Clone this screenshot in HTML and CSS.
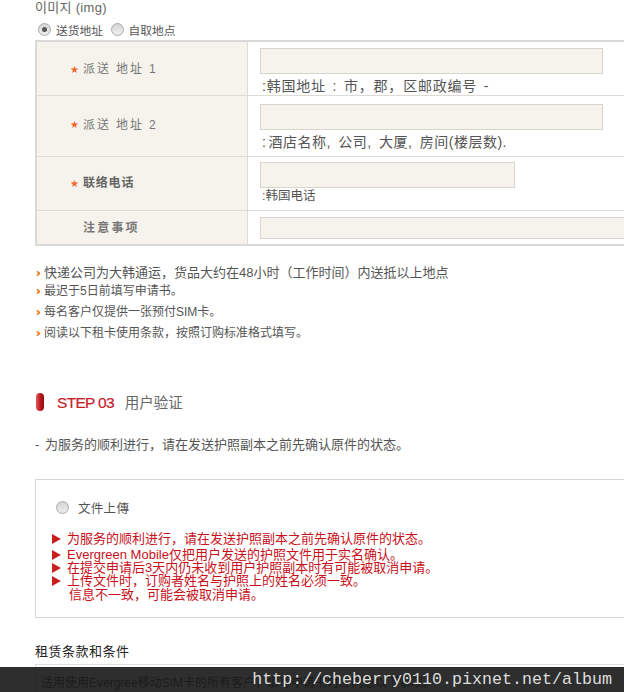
FILE: index.html
```html
<!DOCTYPE html>
<html lang="zh">
<head>
    <meta charset="UTF-8">
    <meta name="viewport" content="width=device-width, initial-scale=1.0">
    <title>STEP 03</title>
    <link rel="stylesheet" href="styles.css">
</head>
<body>
    <div class="page">
        <div class="img-note">이미지 (img)</div>
        <div class="ship-options">
            <span class="radio radio-on"></span><span class="ship-label">送货地址</span>
            <span class="radio"></span><span class="ship-label">自取地点</span>
        </div>

        <div class="form-table">
            <div class="row row-addr1">
                <div class="cell-label"><span class="star">★</span><span class="label-spaced">派送 地址 1</span></div>
                <div class="cell-field">
                    <div class="input"></div>
                    <div class="hint">:韩国地址 : 市，郡，区邮政编号 -</div>
                </div>
            </div>
            <div class="row row-addr2">
                <div class="cell-label"><span class="star">★</span><span class="label-spaced">派送 地址 2</span></div>
                <div class="cell-field">
                    <div class="input"></div>
                    <div class="hint hint-wide"><span class="colon">:</span>酒店名称, 公司, 大厦, 房间(楼层数).</div>
                </div>
            </div>
            <div class="row row-phone">
                <div class="cell-label"><span class="star">★</span><span class="label-bold">联络电话</span></div>
                <div class="cell-field">
                    <div class="input input-short"></div>
                    <div class="hint hint-small">:韩国电话</div>
                </div>
            </div>
            <div class="row row-note">
                <div class="cell-label"><span class="label-note">注意事项</span></div>
                <div class="cell-field">
                    <div class="input input-wide"></div>
                </div>
            </div>
        </div>

        <ul class="notes">
            <li class="note-first">快递公司为大韩通运，货品大约在48小时（工作时间）内送抵以上地点</li>
            <li>最迟于5日前填写申请书。</li>
            <li>每名客户仅提供一张预付SIM卡。</li>
            <li>阅读以下租卡使用条款，按照订购标准格式填写。</li>
        </ul>

        <div class="step-head">
            <span class="pill"></span>
            <span class="step-no">STEP 03</span>
            <span class="step-title">用户验证</span>
        </div>

        <p class="step-desc">- 为服务的顺利进行，请在发送护照副本之前先确认原件的状态。</p>

        <div class="upload-box">
            <div class="upload-row"><span class="radio"></span><span class="upload-label">文件上傳</span></div>
            <div class="warn warn-first"><span class="tri"></span>为服务的顺利进行，请在发送护照副本之前先确认原件的状态。</div>
            <div class="warn"><span class="tri"></span>Evergreen Mobile仅把用户发送的护照文件用于实名确认。</div>
            <div class="warn"><span class="tri"></span>在提交申请后3天内仍未收到用户护照副本时有可能被取消申请。</div>
            <div class="warn"><span class="tri"></span>上传文件时，订购者姓名与护照上的姓名必须一致。</div>
            <div class="warn warn-cont">信息不一致，可能会被取消申请。</div>
        </div>

        <div class="terms-title">租赁条款和条件</div>
        <div class="terms-box">适用使用Evergree移动SIM卡的所有客户，填写申请书时应同意以下事项。</div>
    </div>

    <div class="watermark">http://cheberry0110.pixnet.net/album</div>
</body>
</html>
```

FILE: styles.css
```css
html, body {
    margin: 0;
    height: 692px;
    overflow: hidden;
    background: #fff;
}
body {
    font-family: "Liberation Sans", "Noto Sans CJK SC", sans-serif;
    color: #555;
    font-size: 12px;
}
.page {
    padding-left: 35px;
    width: 589px;
    overflow: hidden;
}
.img-note {
    height: 18px;
    line-height: 15px;
    font-size: 13px;
    letter-spacing: 0.3px;
    font-family: "Liberation Sans", "Noto Sans CJK KR", sans-serif;
    color: #666;
}
.ship-options {
    display: flex;
    align-items: center;
    height: 22px;
    padding-left: 3px;
    box-sizing: border-box;
}
.radio {
    width: 11px;
    height: 11px;
    border-radius: 50%;
    border: 1px solid #aaa;
    background: linear-gradient(#d4d4d4, #eee);
    flex: none;
    position: relative;
}
.radio-on::after {
    content: "";
    position: absolute;
    left: 3px;
    top: 3px;
    width: 5px;
    height: 5px;
    border-radius: 50%;
    background: #555;
}
.ship-label {
    margin: 0 7.5px 0 5px;
    font-size: 11.75px;
}
.form-table {
    border: 2px solid #d9d9d9;
    width: 660px;
    box-sizing: border-box;
    background: #fff;
}
.row {
    display: flex;
    border-bottom: 1px solid #dedbd5;
}
.row-addr1 { height: 53px; }
.row-addr2 { height: 60px; }
.row-phone { height: 53px; }
.row-note { height: 33px; border-bottom: 0; }
.cell-label {
    width: 211px;
    flex: none;
    box-sizing: border-box;
    background: #f6f3ec;
    border-right: 1px solid #dedbd5;
    padding-left: 33px;
    display: flex;
    align-items: center;
}
.row-addr1 .cell-label { padding-bottom: 2px; }
.row-addr2 .cell-label { padding-bottom: 6px; }
.row-phone .cell-label { padding-bottom: 4px; }
.row-note .cell-label { padding-bottom: 3px; }
.star {
    color: #f0672a;
    font-size: 10px;
    width: 13px;
    padding-top: 3px;
    font-family: "DejaVu Sans", sans-serif;
}
.label-spaced {
    letter-spacing: 1.9px;
    font-size: 12px;
    color: #777;
}
.label-bold {
    font-size: 12px;
    font-weight: bold;
    letter-spacing: 0.8px;
    color: #666;
}
.label-note {
    margin-left: 13px;
    letter-spacing: 2.2px;
    font-size: 12px;
    font-weight: bold;
    color: #777;
}
.cell-field {
    padding: 6px 0 0 12px;
    flex: 1;
}
.row-addr2 .cell-field { padding-top: 8px; }
.row-phone .cell-field { padding-top: 5px; }
.input {
    box-sizing: border-box;
    width: 343px;
    height: 26px;
    background: #f6f3ec;
    border: 1px solid #d8d4cf;
}
.input-short { width: 255px; }
.input-wide { width: 400px; height: 22px; }
.hint {
    font-size: 14px;
    line-height: 22px;
    margin-top: 1px;
    padding-left: 2px;
    letter-spacing: 0.8px;
    word-spacing: 2px;
}
.hint-wide {
    letter-spacing: 0.5px;
    word-spacing: 3px;
}
.colon { margin-right: 2px; }
.hint-small {
    font-size: 12.5px;
    line-height: 16px;
    margin-top: 0;
    letter-spacing: 0;
    word-spacing: 0;
}
.notes {
    list-style: none;
    margin: 19px 0 0;
    padding: 0;
}
.notes li {
    position: relative;
    padding-left: 9px;
    font-size: 12px;
    line-height: 16px;
    margin-bottom: 5px;
}
.notes li::before {
    content: "";
    position: absolute;
    left: 0;
    top: 6px;
    width: 3px;
    height: 3px;
    border-top: 2px solid #ef7a1d;
    border-right: 2px solid #ef7a1d;
    transform: rotate(45deg) scale(0.8);
}
.notes .note-first {
    font-size: 13px;
    margin-bottom: 2px;
    white-space: nowrap;
}
.step-head {
    display: flex;
    align-items: center;
    margin-top: 51px;
    height: 20px;
}
.pill {
    width: 8px;
    height: 18px;
    border-radius: 4px;
    margin-left: 1px;
    background: linear-gradient(90deg, #e35a5a, #b3151b 60%, #8e1015);
}
.step-no {
    margin-left: 13px;
    padding-top: 2px;
    color: #c8202a;
    font-size: 15.5px;
    letter-spacing: -0.7px;
    -webkit-text-stroke: 0.2px #c8202a;
}
.step-title {
    margin-left: 11px;
    padding-bottom: 2px;
    font-size: 14.5px;
    color: #666;
}
.step-desc {
    margin: 25px 0 0;
    font-size: 13px;
    line-height: 16px;
    word-spacing: 2px;
}
.upload-box {
    box-sizing: border-box;
    margin-top: 26px;
    height: 139px;
    width: 640px;
    border: 1px solid #d6d6d6;
    padding: 19px 0 0 15px;
}
.upload-row {
    display: flex;
    align-items: center;
    padding-left: 5px;
    height: 16px;
}
.upload-label {
    margin-left: 9px;
    font-size: 12.5px;
    letter-spacing: 0.3px;
}
.warn {
    color: #c8101a;
    font-size: 13px;
    line-height: 13px;
    white-space: nowrap;
}
.warn-first { margin-top: 17px; margin-bottom: 3px; }
.warn-cont { padding-left: 18px; margin-top: 1px; }
.tri {
    display: inline-block;
    width: 0;
    height: 0;
    border-left: 9px solid #c8201e;
    border-top: 5px solid transparent;
    border-bottom: 5px solid transparent;
    margin: 0 6px 0 1px;
    vertical-align: -1px;
}
.terms-title {
    margin-top: 26px;
    font-size: 13px;
    line-height: 16px;
    letter-spacing: 0.5px;
    color: #222;
}
.terms-box {
    box-sizing: border-box;
    margin-top: 4px;
    width: 640px;
    height: 60px;
    border: 1px solid #ddd;
    padding: 8px 5px;
    font-size: 12px;
    color: #444;
    white-space: nowrap;
}
.watermark {
    position: absolute;
    left: 0;
    right: 0;
    top: 667px;
    height: 25px;
    box-sizing: border-box;
    padding-right: 12px;
    background: rgba(23, 23, 23, 0.9);
    color: #ddd;
    font-family: "Liberation Mono", monospace;
    font-size: 16.67px;
    line-height: 25px;
    text-align: right;
    white-space: nowrap;
}
```
